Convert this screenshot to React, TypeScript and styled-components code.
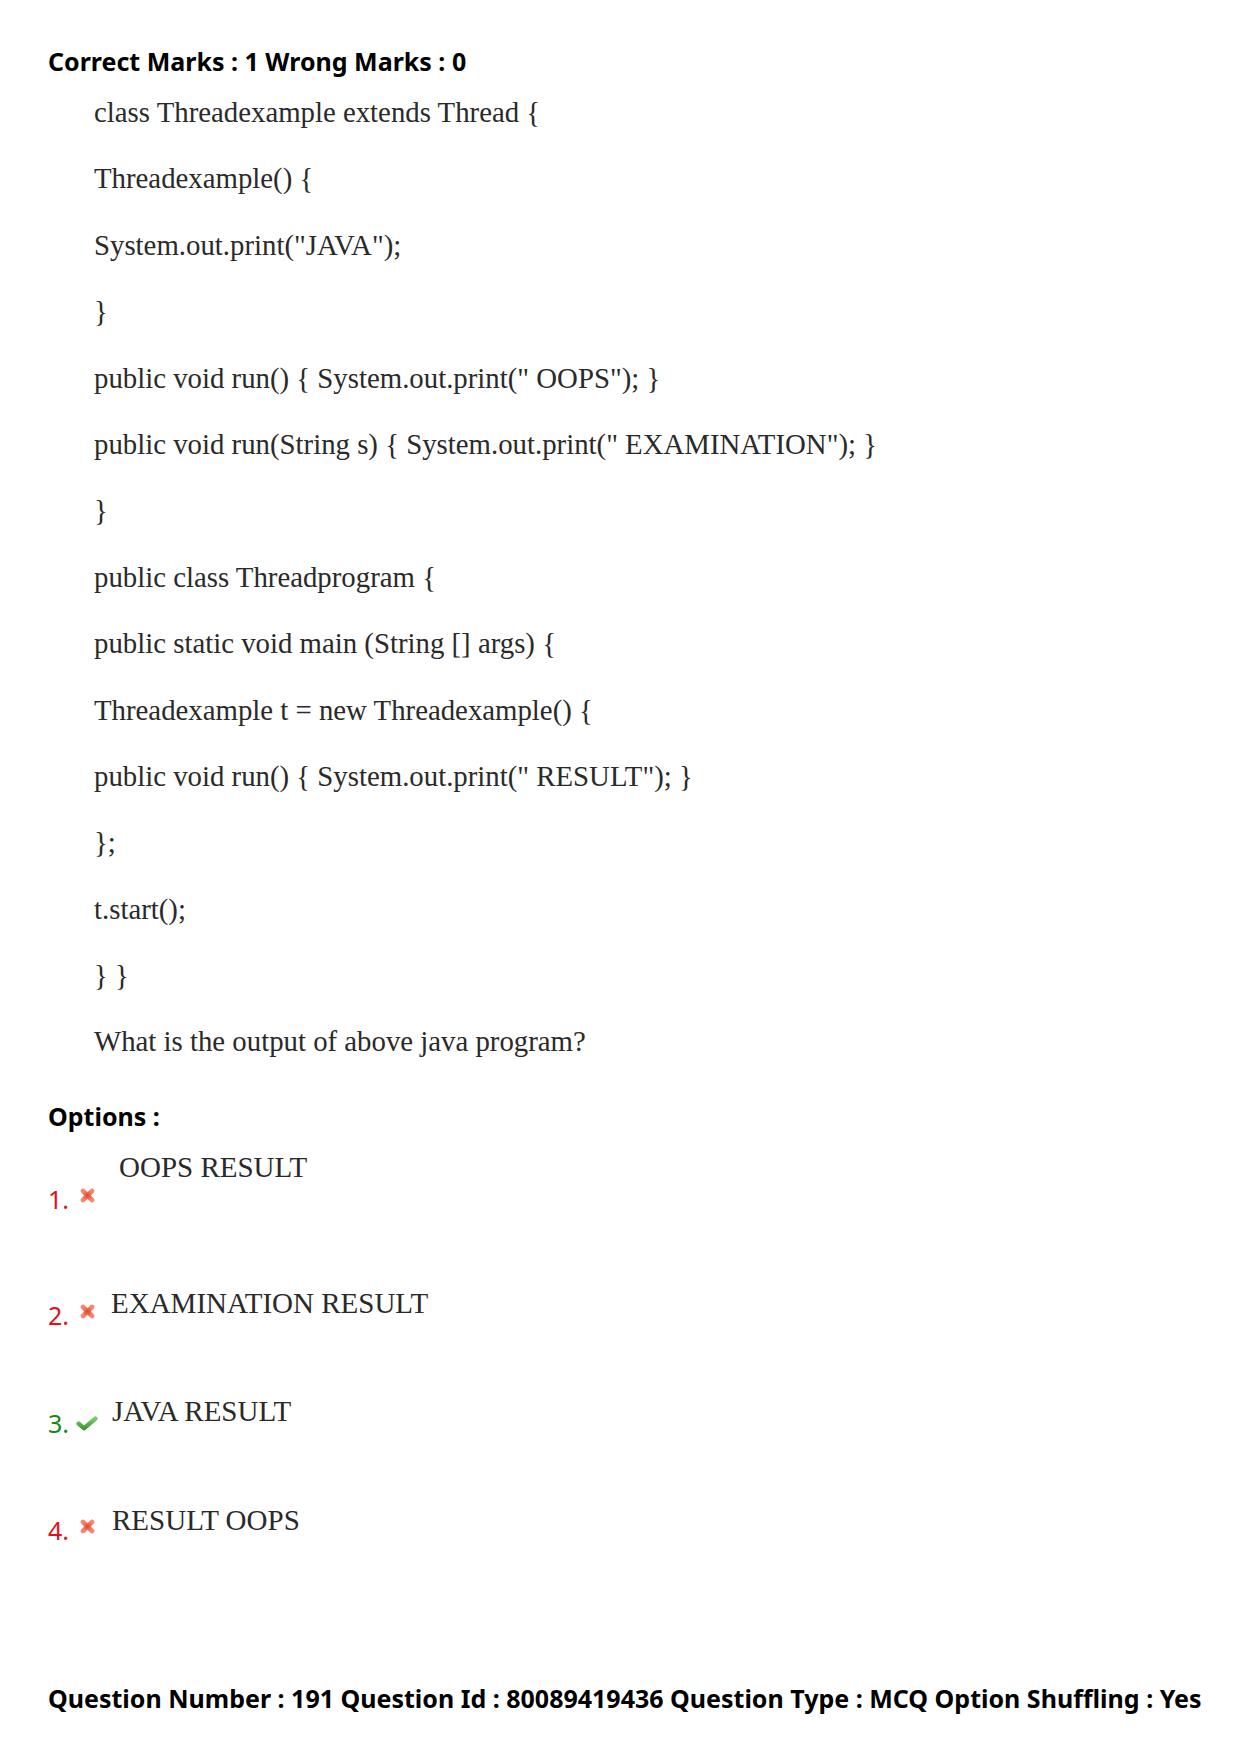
import React from "react";
import styled, { createGlobalStyle } from "styled-components";

const Global = createGlobalStyle`
  html, body { margin: 0; padding: 0; background: #fff; }
  body { font-family: "Noto Sans", "Open Sans", sans-serif; }
`;

const Page = styled.div`
  width: 1240px;
  padding: 46px 0 40px 48px;
  box-sizing: border-box;
`;

const Meta = styled.div`
  font-family: "Noto Sans", sans-serif;
  font-weight: 700;
  font-size: 25px;
  line-height: 30px;
  color: #000;
  white-space: nowrap;
`;

const CodeBlock = styled.div`
  margin: 3px 0 0 46px;
`;

const CodeLine = styled.div`
  font-family: "Liberation Serif", "Times New Roman", serif;
  font-size: 28.8px;
  line-height: 66.4px;
  height: 66.4px;
  color: #2a2a2a;
  white-space: pre;
`;

const OptionsTitle = styled(Meta)`
  margin-top: 26px;
`;

const OptionList = styled.div`
  display: flex;
  flex-direction: column;
`;

const OptionRow = styled.div<{ $gap: number }>`
  display: flex;
  align-items: flex-end;
  margin-top: ${(p) => p.$gap}px;
`;

const Label = styled.div<{ $ok: boolean }>`
  display: flex;
  align-items: center;
  width: 64px;
  height: 30px;
  font-family: "Noto Sans", sans-serif;
  font-size: 25px;
  line-height: 30px;
  color: ${(p) => (p.$ok ? "#138a13" : "#e3101a")};
`;

const Num = styled.span`
  display: inline-block;
  width: 32px;
`;

const IconBox = styled.span<{ $ok: boolean }>`
  display: flex;
  margin-left: ${(p) => (p.$ok ? -4 : 0)}px;
  margin-bottom: ${(p) => (p.$ok ? -1 : 6)}px;
`;

const OptText = styled.div<{ $pad: number; $shift: number }>`
  font-family: "Liberation Serif", "Times New Roman", serif;
  font-size: 29px;
  line-height: 36px;
  color: #2a2a2a;
  padding-bottom: ${(p) => p.$pad}px;
  margin-left: ${(p) => p.$shift}px;
  white-space: pre;
`;

const Footer = styled(Meta)`
  margin-top: 138px;
`;

const Cross = () => (
  <svg width="15" height="15" viewBox="0 0 15 15">
    <defs>
      <radialGradient id="cg" cx="0.5" cy="0.5" r="0.6">
        <stop offset="0" stopColor="#e2452c" />
        <stop offset="1" stopColor="#f5876c" />
      </radialGradient>
    </defs>
    <g stroke="url(#cg)" strokeWidth="4.6" strokeLinecap="round">
      <line x1="3" y1="3" x2="12" y2="12" />
      <line x1="12" y1="3" x2="3" y2="12" />
    </g>
  </svg>
);

const Check = () => (
  <svg width="22" height="15" viewBox="0 0 22 15">
    <defs>
      <linearGradient id="gg" x1="0" y1="0" x2="0" y2="1">
        <stop offset="0" stopColor="#78cc68" />
        <stop offset="1" stopColor="#3e9a37" />
      </linearGradient>
    </defs>
    <polyline
      points="2.6,7.6 8,12.2 19.4,2.6"
      fill="none"
      stroke="url(#gg)"
      strokeWidth="4.4"
      strokeLinecap="round"
      strokeLinejoin="round"
    />
  </svg>
);

const code = [
  "class Threadexample extends Thread {",
  "Threadexample() {",
  'System.out.print("JAVA");',
  "}",
  'public void run() { System.out.print(" OOPS"); }',
  'public void run(String s) { System.out.print(" EXAMINATION"); }',
  "}",
  "public class Threadprogram {",
  "public static void main (String [] args) {",
  "Threadexample t = new Threadexample() {",
  'public void run() { System.out.print(" RESULT"); }',
  "};",
  "t.start();",
  "} }",
  "What is the output of above java program?",
];

const options = [
  { n: "1.", text: "OOPS RESULT", ok: false, gap: 18, pad: 29, shift: 7 },
  { n: "2.", text: "EXAMINATION RESULT", ok: false, gap: 71, pad: 9, shift: -1 },
  { n: "3.", text: "JAVA RESULT", ok: true, gap: 63, pad: 9, shift: 0 },
  { n: "4.", text: "RESULT OOPS", ok: false, gap: 64, pad: 7, shift: 0 },
];

export default function App() {
  return (
    <Page>
      <Global />
      <Meta>Correct Marks : 1 Wrong Marks : 0</Meta>
      <CodeBlock>
        {code.map((l, i) => (
          <CodeLine key={i}>{l}</CodeLine>
        ))}
      </CodeBlock>
      <OptionsTitle>Options :</OptionsTitle>
      <OptionList>
        {options.map((o) => (
          <OptionRow key={o.n} $gap={o.gap}>
            <Label $ok={o.ok}>
              <Num>{o.n}</Num>
              <IconBox $ok={o.ok}>{o.ok ? <Check /> : <Cross />}</IconBox>
            </Label>
            <OptText $pad={o.pad} $shift={o.shift}>
              {o.text}
            </OptText>
          </OptionRow>
        ))}
      </OptionList>
      <Footer>Question Number : 191 Question Id : 80089419436 Question Type : MCQ Option Shuffling : Yes</Footer>
    </Page>
  );
}
